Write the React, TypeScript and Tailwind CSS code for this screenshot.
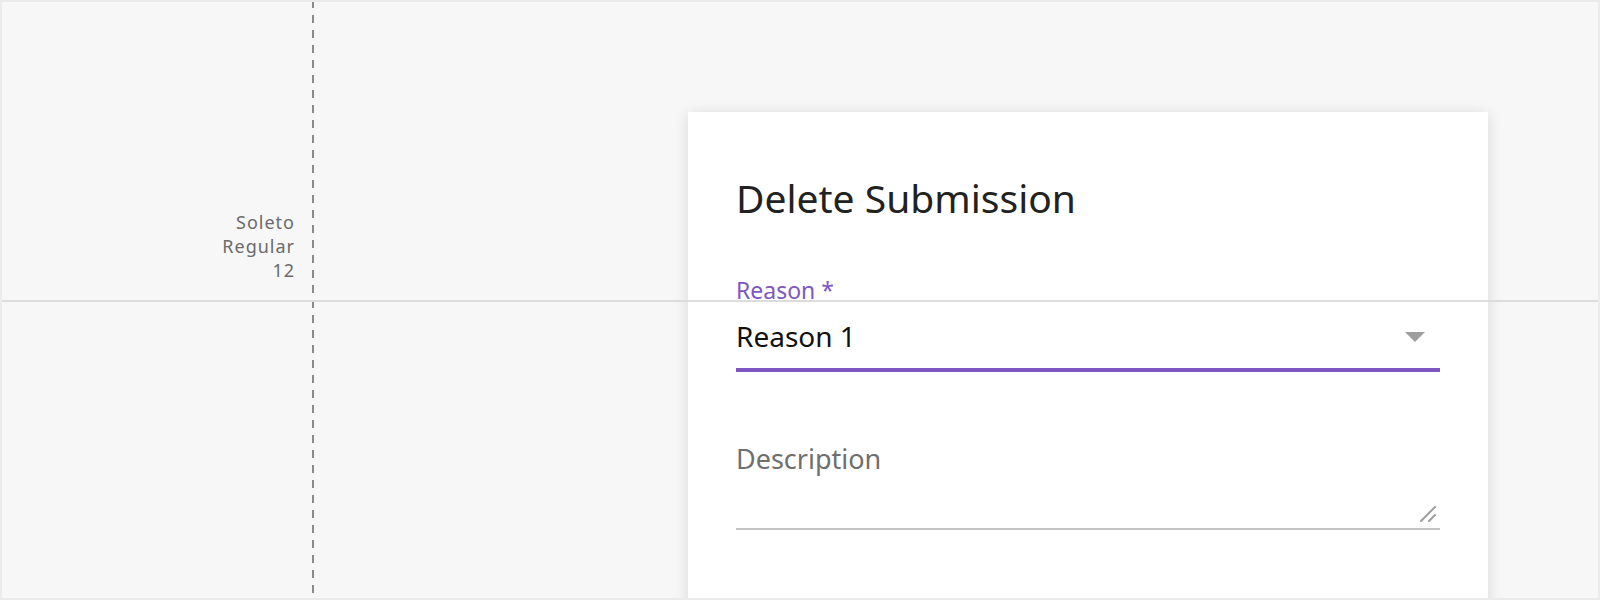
import React from "react";

const font = { fontFamily: '"Noto Sans", "Open Sans", sans-serif' };

const SelectField = () => (
  <div className="mt-[54px]">
    <div className="text-[23px] leading-[28px] text-[#7e57c2]">Reason *</div>
    <div className="mt-[14px] flex items-center justify-between pr-[15px]">
      <span className="text-[28px] leading-[36px] text-[#111111]">Reason 1</span>
      <svg width="20" height="10" viewBox="0 0 20 10" className="mt-[2px]">
        <path d="M0 0 L20 0 L10 10 Z" fill="#9e9e9e" />
      </svg>
    </div>
    <div className="mt-[14px] h-[4px] bg-[#7e57c2]" />
  </div>
);

const DescriptionField = () => (
  <div className="mt-[69px]">
    <div className="text-[27px] leading-[36px] text-[#6f6f6f]">Description</div>
    <div className="mt-[29px] flex justify-end pr-[4px]">
      <svg width="16" height="16" viewBox="0 0 16 16">
        <path d="M1 15 L15 1 M9 15 L15 9" stroke="#9e9e9e" strokeWidth="2" strokeLinecap="round" />
      </svg>
    </div>
    <div className="mt-[6px] h-[2px] bg-[#c4c4c4]" />
  </div>
);

export default function App() {
  return (
    <div className="relative flex h-[600px] w-full overflow-hidden bg-[#f7f7f7]" style={font}>
      <div className="w-[295px] shrink-0 pt-[210px] text-right text-[18px] leading-[24px] tracking-[1px] text-[#6b6b6b]">
        <div>Soleto</div>
        <div>Regular</div>
        <div>12</div>
      </div>

      <div className="ml-[393px] mt-[112px] h-[540px] w-[800px] shrink-0 bg-white px-12 pt-[62px] shadow-[0_2px_14px_rgba(0,0,0,0.13)]">
        <h1 className="text-[39px] leading-[48px] text-[#222222]">Delete Submission</h1>
        <SelectField />
        <DescriptionField />
      </div>

      {/* guide lines */}
      <div className="pointer-events-none absolute left-[312px] top-0 h-full w-[2px] bg-[repeating-linear-gradient(to_bottom,#8a8a8a_0_8px,transparent_8px_15px)]" />
      <div className="pointer-events-none absolute left-0 top-[300px] h-[2px] w-full bg-[#dcdcdc]" />
      <div className="pointer-events-none absolute inset-0 border-2 border-[#ebebeb]" />
    </div>
  );
}
